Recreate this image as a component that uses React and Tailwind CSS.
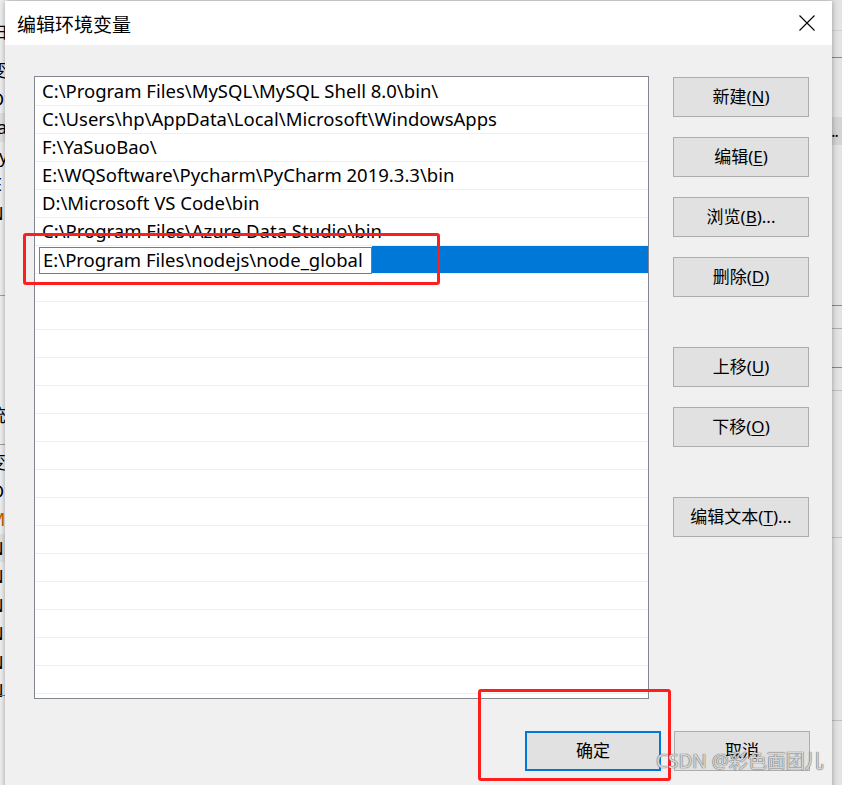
import React from "react";

const paths = [
  "C:\\Program Files\\MySQL\\MySQL Shell 8.0\\bin\\",
  "C:\\Users\\hp\\AppData\\Local\\Microsoft\\WindowsApps",
  "F:\\YaSuoBao\\",
  "E:\\WQSoftware\\Pycharm\\PyCharm 2019.3.3\\bin",
  "D:\\Microsoft VS Code\\bin",
  "C:\\Program Files\\Azure Data Studio\\bin",
];

const leftTop = [
  { t: "变", ml: "-ml-[11px]" },
  { t: "D", ml: "-ml-[9px]" },
  { t: "Pa", ml: "-ml-[14px]", hl: true },
  { t: "Py", ml: "-ml-[12px]" },
  { t: "E", ml: "-ml-[8px]" },
  { t: "N", ml: "-ml-[10px]" },
];

const leftBottom = [
  { t: "变", ml: "-ml-[12px]" },
  { t: "D", ml: "-ml-[9px]" },
  { t: "M", ml: "-ml-[11px]", c: "text-[#c06000]" },
  { t: "N", ml: "-ml-[10px]", hl: true },
  { t: "N", ml: "-ml-[10px]" },
  { t: "N", ml: "-ml-[10px]" },
  { t: "N", ml: "-ml-[10px]" },
  { t: "N", ml: "-ml-[10px]" },
  { t: "N", ml: "-ml-[10px]" },
];

function Frag({ t, ml, hl, c = "text-black" }) {
  return (
    <div className={"flex h-[28.5px] shrink-0 items-center whitespace-nowrap " + (hl ? "bg-[#e2e2e2]" : "")}>
      <span className={ml + " " + c}>{t}</span>
    </div>
  );
}

function Btn({ label, u, tail = "", className = "" }) {
  return (
    <div
      className={
        "flex h-[40px] w-[136px] items-center justify-center border border-[#adadad] bg-[#e1e1e1] text-[17px] text-black " +
        className
      }
    >
      <span>
        {label}(<span className="underline underline-offset-2">{u}</span>){tail}
      </span>
    </div>
  );
}

export default function App() {
  const emptyRows = Array.from({ length: 15 });
  return (
    <div className="relative flex h-[785px] w-[842px] justify-between overflow-hidden bg-[#e6e6e6] font-['Noto_Sans','Noto_Sans_CJK_SC',sans-serif]">
      {/* background window, left strip */}
      <div className="flex h-full w-[8px] shrink-0 flex-col overflow-hidden bg-[#f0f0f0] pt-[17px] text-[18px] leading-none">
        <div className="flex h-[28px] shrink-0 items-center">
          <span className="-ml-[10px]">白</span>
        </div>
        <div className="mt-[11px] flex flex-col">
          {leftTop.map((f, i) => (
            <Frag key={"a" + i} {...f} />
          ))}
        </div>
        <div className="mt-[68px] h-px shrink-0 bg-[#a0a0a0]" />
        <div className="mt-[105px] flex h-[28px] shrink-0 items-center">
          <span className="-ml-[12px]">统</span>
        </div>
        <div className="mt-[15px] h-px shrink-0 bg-[#a0a0a0]" />
        <div className="mt-[3px] flex flex-col">
          {leftBottom.map((f, i) => (
            <Frag key={"b" + i} {...f} />
          ))}
        </div>
        <div className="mt-[-10px] h-px shrink-0 bg-[#808080]" />
      </div>

      {/* background window, right strip */}
      <div className="flex h-full w-[14px] shrink-0 flex-col overflow-hidden bg-[#e4e4e4] pt-[30px] text-[16px] leading-none">
        <div className="h-px shrink-0 bg-[#d0d0d0]" />
        <div className="mt-[26px] h-px shrink-0 bg-[#8a8a8a]" />
        <div className="mt-[59px] flex h-[28px] shrink-0 items-end bg-[#d4d4d4] pb-[6px] tracking-[-1px]">...</div>
        <div className="mt-[160px] h-px shrink-0 bg-[#8a8a8a]" />
        <div className="mt-[22px] h-px shrink-0 bg-[#b0b0b0]" />
        <div className="flex h-[38px] shrink-0 items-center text-[18px] text-[#1a3a80]">
          <span className="-ml-[2px]">)</span>
        </div>
        <div className="h-px shrink-0 bg-[#8a8a8a]" />
        <div className="mt-[22px] h-px shrink-0 bg-[#c0c0c0]" />
        <div className="mt-[146px] h-px shrink-0 bg-[#c0c0c0]" />
        <div className="mt-[182px] h-px shrink-0 bg-[#c0c0c0]" />
      </div>

      {/* dialog window */}
      <div className="absolute left-[5px] top-[1px] flex h-[790px] w-[827px] flex-col bg-[#f0f0f0] shadow-[0_0_6px_rgba(0,0,0,0.35)]">
        {/* title bar */}
        <div className="flex h-[44px] shrink-0 items-center justify-between bg-white pl-[12px] pr-[17px]">
          <span className="text-[19px] leading-none text-black font-['Noto_Sans_CJK_SC',sans-serif]">
            编辑环境变量
          </span>
          <svg className="-mt-px" width="16" height="16" viewBox="0 0 16 16">
            <path d="M0.5 0.5 L15.5 15.5 M15.5 0.5 L0.5 15.5" stroke="#000" strokeWidth="1.1" fill="none" />
          </svg>
        </div>

        {/* body */}
        <div className="flex pl-[29px] pt-[31px]">
          {/* list */}
          <div className="relative h-[623px] w-[615px] shrink-0 border border-[#828790] bg-white pt-px text-[18.5px] text-black">
            {paths.map((p) => (
              <div
                key={p}
                className="flex h-[28px] items-center whitespace-nowrap border-b border-[#efefef] pl-[7px] leading-none"
              >
                {p}
              </div>
            ))}
            <div className="flex h-[28px] border-b border-[#efefef]">
              <div className="w-[4px] bg-white" />
              <div className="mt-px flex h-[27px] w-[333px] items-center whitespace-nowrap border border-[#7a7a7a] bg-white pl-[3px] leading-none">
                E:\Program Files\nodejs\node_global
              </div>
              <div className="flex-1 bg-[#0078d7]" />
            </div>
            {emptyRows.map((_, i) => (
              <div key={i} className="h-[28px] border-b border-[#efefef]" />
            ))}

            {/* red annotation box */}
            <div className="pointer-events-none absolute left-[-12px] top-[156px] h-[52px] w-[417px] rounded-[3px] border-[3px] border-[#ff1e1e]" />
          </div>

          {/* buttons */}
          <div className="ml-[24px] flex flex-col pt-px">
            <div className="flex flex-col gap-[20px]">
              <Btn label="新建" u="N" />
              <Btn label="编辑" u="E" />
              <Btn label="浏览" u="B" tail="..." />
              <Btn label="删除" u="D" />
            </div>
            <div className="mt-[50px] flex flex-col gap-[20px]">
              <Btn label="上移" u="U" />
              <Btn label="下移" u="O" />
            </div>
            <Btn label="编辑文本" u="T" tail="..." className="mt-[50px]" />
          </div>
        </div>

        {/* footer */}
        <div className="mt-[32px] flex justify-end gap-[13px] pr-[22px]">
          <div className="relative flex h-[40px] w-[136px] items-center justify-center border-2 border-[#0078d7] bg-[#e1e1e1] text-[17px] text-black">
            确定
            <div className="pointer-events-none absolute left-[-49px] top-[-44px] h-[92px] w-[193px] rounded-[3px] border-[3px] border-[#ff1e1e]" />
          </div>
          <div className="relative flex h-[40px] w-[136px] items-center justify-center border border-[#adadad] bg-[#e1e1e1] text-[17px] text-black">
            取消
            {/* watermark */}
            <div className="pointer-events-none absolute left-[-19px] top-[20px] whitespace-nowrap text-[19px] leading-none text-[#d6d6d6] [text-shadow:0_0_1px_#555,0_0_1px_#777] font-['Noto_Sans','Noto_Sans_CJK_SC',sans-serif]">
              CSDN @彩色面团儿
            </div>
          </div>
        </div>
      </div>
    </div>
  );
}
